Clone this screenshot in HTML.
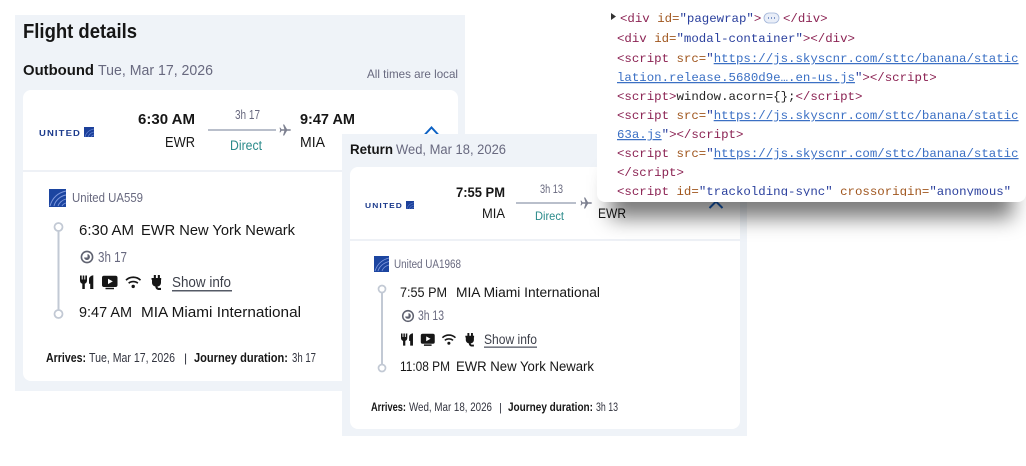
<!DOCTYPE html>
<html><head><meta charset="utf-8"><title>Flight details</title>
<style>
html,body{margin:0;padding:0;background:#fff;width:1026px;height:466px;overflow:hidden}
svg{display:block}
text{font-family:"Liberation Sans",sans-serif;white-space:pre;fill:#161616}
.g{fill:#68697f}
.b{font-weight:bold}
.m{font-family:"Liberation Mono",monospace;font-size:12.4px}
.tg{fill:#8b2252}.at{fill:#a0561f}.vl{fill:#2a3f9d}.ln{fill:#3a6fc4;text-decoration:underline}.tx{fill:#222}
</style></head><body>
<svg width="1026" height="466" viewBox="0 0 1026 466" xmlns="http://www.w3.org/2000/svg">
<defs>
<filter id="sh" x="-20%" y="-100%" width="140%" height="300%"><feGaussianBlur stdDeviation="10"/></filter>
<filter id="soft" x="0" y="0" width="100%" height="100%"><feGaussianBlur stdDeviation="0.35"/></filter>
<g id="plane"><path d="M12 6C12 5.4 11 5.2 10 5.2L8 5.2L5.2.5L4 .5L5.4 5.2L2.5 5.2L1.4 3.6L.5 3.6L1.2 6L.5 8.4L1.4 8.4L2.5 6.8L5.4 6.8L4 11.5L5.2 11.5L8 6.8L10 6.8C11 6.8 12 6.6 12 6Z" fill="#7d8090"/></g>
<g id="sq"><rect width="10" height="10" fill="#1c3f9a"/><path d="M1 10C2 6 5 3 10 2M4 10C5 7.5 7 5.5 10 5M7 10C7.5 9 8.5 8 10 8" fill="none" stroke="#5f80cf" stroke-width=".7"/></g>
<g id="icons" fill="#161616">
<path d="M0 .5h1.700v4h1V.5h1.600v4h1V.5H7v5c0 1.700-.9 2.800-2.200 3.200V14H2.300V8.700C.9 8.300 0 7.200 0 5.500Z"/>
<path d="M10.200 14V8.700H9V4.500C9 2.300 10.500.8 13.300.3V14Z"/>
<path d="M24 .8h11.500a2 2 0 0 1 2 2v7.200a2 2 0 0 1-2 2H24a2 2 0 0 1-2-2V2.800a2 2 0 0 1 2-2ZM25.500 12.700h8.500v1.600h-8.500Z"/>
<path d="M28 3.700l4.800 2.700-4.800 2.700Z" fill="#fff"/>
<path d="M46 5.200C50 1.300 56.500 1.300 60.500 5.200" fill="none" stroke="#161616" stroke-width="1.700"/>
<path d="M48.700 8.200C51 6 55.500 6 57.800 8.200" fill="none" stroke="#161616" stroke-width="1.700"/>
<circle cx="53.200" cy="11.400" r="1.700"/>
<path d="M73.800 0h2.100v3h1.900V0h2.100v3h1.300v1.800h-.2v2.700c0 2.300-1.400 3.700-3.500 4 .1 1 .6 1.400 1.500 1.400h2V15h-2c-2 0-3.500-1.100-3.700-3.500-2-.4-3.300-1.800-3.300-4V4.800H71.500V3h2.300Z"/>
</g>
<g id="clk"><circle r="5.600" fill="none" stroke="#5f6270" stroke-width="1.600"/><path d="M.5-3A3 3 0 1 1-3 .5H.5Z" fill="#5f6270"/></g>
</defs>

<g filter="url(#soft)">
<!-- outbound panel -->
<rect x="15" y="15" width="450" height="376" fill="#eff3f8"/>
<text x="23" y="38" font-size="20" class="b" textLength="114" lengthAdjust="spacingAndGlyphs">Flight details</text>
<text x="23" y="75" font-size="15" class="b" textLength="71" lengthAdjust="spacingAndGlyphs">Outbound</text>
<text x="98" y="75" font-size="15" class="g" textLength="115" lengthAdjust="spacingAndGlyphs">Tue, Mar 17, 2026</text>
<text x="367" y="78" font-size="12" class="g" textLength="91" lengthAdjust="spacingAndGlyphs">All times are local</text>
<rect x="23" y="90" width="435" height="291" rx="8" fill="#fff"/>
<rect x="23" y="170" width="435" height="2" fill="#eef1f6"/>
<text x="39" y="136" font-size="8.5" class="b" style="fill:#1b3a8c" textLength="42" lengthAdjust="spacingAndGlyphs" letter-spacing="1">UNITED</text>
<use href="#sq" x="84" y="127"/>
<text x="138" y="124" font-size="15" class="b" textLength="57" lengthAdjust="spacingAndGlyphs">6:30 AM</text>
<text x="165" y="147" font-size="15" textLength="30" lengthAdjust="spacingAndGlyphs">EWR</text>
<text x="235" y="119" font-size="12.5" class="g" textLength="25" lengthAdjust="spacingAndGlyphs">3h 17</text>
<rect x="208" y="129" width="68" height="2" fill="#b9bfcb"/>
<use href="#plane" x="279" y="124"/>
<text x="230" y="150" font-size="13.5" style="fill:#2a8a8a" textLength="32" lengthAdjust="spacingAndGlyphs">Direct</text>
<text x="300" y="124" font-size="15" class="b" textLength="55" lengthAdjust="spacingAndGlyphs">9:47 AM</text>
<text x="300" y="147" font-size="15" textLength="25" lengthAdjust="spacingAndGlyphs">MIA</text>
<path d="M424.5 135L431.5 127.5L438.5 135" fill="none" stroke="#0f62c4" stroke-width="2"/>

<rect x="49" y="189" width="17" height="18" fill="#1f44a0"/>
<path d="M50 206C52 199 57 193 66 191M54 206C55 201 60 196 66 195M58 206C59 203 62 200 66 199M62 206C62.5 205 64 203.500 66 203" fill="none" stroke="#7f9ade" stroke-width=".9"/>
<text x="72" y="202" font-size="12.5" class="g" textLength="71" lengthAdjust="spacingAndGlyphs">United UA559</text>
<rect x="57.5" y="231" width="2" height="80" fill="#c2c9d4"/>
<circle cx="58.5" cy="227" r="4" fill="#fff" stroke="#c2c9d4" stroke-width="1.8"/>
<circle cx="58.5" cy="314" r="4" fill="#fff" stroke="#c2c9d4" stroke-width="1.8"/>
<text x="79" y="235" font-size="15" textLength="55" lengthAdjust="spacingAndGlyphs">6:30 AM</text>
<text x="141" y="235" font-size="15" textLength="154" lengthAdjust="spacingAndGlyphs">EWR New York Newark</text>
<use href="#clk" x="87" y="257"/>
<text x="98" y="262" font-size="15" class="g" textLength="29" lengthAdjust="spacingAndGlyphs">3h 17</text>
<use href="#icons" x="80" y="275"/>
<text x="172" y="287" font-size="15" style="fill:#3c3f4a" textLength="59" lengthAdjust="spacingAndGlyphs">Show info</text>
<rect x="172" y="290" width="60" height="1.5" fill="#555a66"/>
<text x="79" y="317" font-size="15" textLength="53" lengthAdjust="spacingAndGlyphs">9:47 AM</text>
<text x="141" y="317" font-size="15" textLength="160" lengthAdjust="spacingAndGlyphs">MIA Miami International</text>
<text x="46" y="362" font-size="12.5" class="b" textLength="40" lengthAdjust="spacingAndGlyphs">Arrives:</text>
<text x="89" y="362" font-size="12.5" style="fill:#33343f" textLength="86" lengthAdjust="spacingAndGlyphs">Tue, Mar 17, 2026</text>
<text x="184" y="362" font-size="12" style="fill:#33343f">|</text>
<text x="194" y="362" font-size="12.5" class="b" textLength="94" lengthAdjust="spacingAndGlyphs">Journey duration:</text>
<text x="292" y="362" font-size="12.5" style="fill:#33343f" textLength="24" lengthAdjust="spacingAndGlyphs">3h 17</text>

<!-- return panel -->
<rect x="342" y="134" width="405" height="302" fill="#eff3f8"/>
<text x="350" y="154" font-size="13.5" class="b" textLength="43" lengthAdjust="spacingAndGlyphs">Return</text>
<text x="396" y="154" font-size="13.5" class="g" textLength="110" lengthAdjust="spacingAndGlyphs">Wed, Mar 18, 2026</text>
<rect x="350" y="167" width="390" height="262" rx="8" fill="#fff"/>
<rect x="350" y="239" width="390" height="2" fill="#eef1f6"/>
<text x="365" y="208" font-size="7.5" class="b" style="fill:#1b3a8c" textLength="38" lengthAdjust="spacingAndGlyphs" letter-spacing="1">UNITED</text>
<use href="#sq" transform="translate(406 201) scale(.8)"/>
<text x="456" y="197" font-size="13.5" class="b" textLength="49" lengthAdjust="spacingAndGlyphs">7:55 PM</text>
<text x="482" y="218" font-size="13.5" textLength="23" lengthAdjust="spacingAndGlyphs">MIA</text>
<text x="540" y="193" font-size="11.5" class="g" textLength="23" lengthAdjust="spacingAndGlyphs">3h 13</text>
<rect x="516" y="202" width="60" height="2" fill="#b9bfcb"/>
<use href="#plane" x="580" y="197"/>
<text x="535" y="220" font-size="12" style="fill:#2a8a8a" textLength="29" lengthAdjust="spacingAndGlyphs">Direct</text>
<text x="598" y="218" font-size="13.5" textLength="28" lengthAdjust="spacingAndGlyphs">EWR</text>
<path d="M709.5 208L716 201.5L722.5 208" fill="none" stroke="#0f62c4" stroke-width="2"/>

<rect x="374" y="256" width="15" height="16" fill="#1f44a0"/>
<path d="M375 271C377 265 381 260 389 258M378 271C379 267 383 263 389 261.5M382 271C383 268 385 266 389 265" fill="none" stroke="#7f9ade" stroke-width=".8"/>
<text x="394" y="268" font-size="11.5" class="g" textLength="67" lengthAdjust="spacingAndGlyphs">United UA1968</text>
<rect x="381" y="293" width="2" height="72" fill="#c2c9d4"/>
<circle cx="382" cy="289" r="3.5" fill="#fff" stroke="#c2c9d4" stroke-width="1.7"/>
<circle cx="382" cy="368" r="3.5" fill="#fff" stroke="#c2c9d4" stroke-width="1.7"/>
<text x="400" y="297" font-size="13.5" textLength="47" lengthAdjust="spacingAndGlyphs">7:55 PM</text>
<text x="456" y="297" font-size="13.5" textLength="144" lengthAdjust="spacingAndGlyphs">MIA Miami International</text>
<use href="#clk" transform="translate(408 316) scale(.95)"/>
<text x="418" y="320" font-size="13.5" class="g" textLength="26" lengthAdjust="spacingAndGlyphs">3h 13</text>
<use href="#icons" transform="translate(401 333) scale(.9)"/>
<text x="484" y="344" font-size="13.5" style="fill:#3c3f4a" textLength="53" lengthAdjust="spacingAndGlyphs">Show info</text>
<rect x="484" y="346.5" width="53" height="1.3" fill="#555a66"/>
<text x="400" y="371" font-size="13.5" textLength="50" lengthAdjust="spacingAndGlyphs">11:08 PM</text>
<text x="456" y="371" font-size="13.5" textLength="138" lengthAdjust="spacingAndGlyphs">EWR New York Newark</text>
<text x="371" y="411" font-size="11.5" class="b" textLength="35" lengthAdjust="spacingAndGlyphs">Arrives:</text>
<text x="409" y="411" font-size="11.5" style="fill:#33343f" textLength="83" lengthAdjust="spacingAndGlyphs">Wed, Mar 18, 2026</text>
<text x="499" y="411" font-size="11" style="fill:#33343f">|</text>
<text x="508" y="411" font-size="11.5" class="b" textLength="85" lengthAdjust="spacingAndGlyphs">Journey duration:</text>
<text x="596" y="411" font-size="11.5" style="fill:#33343f" textLength="22" lengthAdjust="spacingAndGlyphs">3h 13</text>

<!-- devtools popup -->
<rect x="610" y="175" width="403" height="43" fill="#000" fill-opacity=".52" filter="url(#sh)"/>
<path d="M611 13L616 16.5L611 20Z" fill="#333"/>
<text class="m" y="22" x="620"><tspan class="tg">&lt;div </tspan><tspan class="at">id=</tspan><tspan class="vl">"pagewrap"</tspan><tspan class="tg">&gt;</tspan></text>
<rect x="597" y="28" width="429" height="174" rx="8" fill="#fff"/>
<rect x="764" y="13" width="15" height="10" rx="5" fill="#e9eef8" stroke="#9fb3d8" stroke-width=".8"/>
<path d="M768 18h1M771 18h1M774 18h1" stroke="#3a5fa8" stroke-width="1.2"/>
<text class="m" y="22" x="783"><tspan class="tg">&lt;/div&gt;</tspan></text>
<text class="m" y="42" x="617"><tspan class="tg">&lt;div </tspan><tspan class="at">id=</tspan><tspan class="vl">"modal-container"</tspan><tspan class="tg">&gt;&lt;/div&gt;</tspan></text>
<text class="m" y="62" x="617"><tspan class="tg">&lt;script </tspan><tspan class="at">src=</tspan><tspan class="vl">"</tspan><tspan class="ln">https://js.skyscnr.com/sttc/banana/static</tspan></text>
<text class="m" y="81" x="617"><tspan class="ln">lation.release.5680d9e….en-us.js</tspan><tspan class="vl">"</tspan><tspan class="tg">&gt;&lt;/script&gt;</tspan></text>
<text class="m" y="100" x="617"><tspan class="tg">&lt;script&gt;</tspan><tspan class="tx">window.acorn={};</tspan><tspan class="tg">&lt;/script&gt;</tspan></text>
<text class="m" y="119" x="617"><tspan class="tg">&lt;script </tspan><tspan class="at">src=</tspan><tspan class="vl">"</tspan><tspan class="ln">https://js.skyscnr.com/sttc/banana/static</tspan></text>
<text class="m" y="138" x="617"><tspan class="ln">63a.js</tspan><tspan class="vl">"</tspan><tspan class="tg">&gt;&lt;/script&gt;</tspan></text>
<text class="m" y="157" x="617"><tspan class="tg">&lt;script </tspan><tspan class="at">src=</tspan><tspan class="vl">"</tspan><tspan class="ln">https://js.skyscnr.com/sttc/banana/static</tspan></text>
<text class="m" y="176" x="617"><tspan class="tg">&lt;/script&gt;</tspan></text>
<svg x="597" y="180" width="429" height="16" viewBox="597 180 429 16"><text class="m" y="195" x="617"><tspan class="tg">&lt;script </tspan><tspan class="at">id=</tspan><tspan class="vl">"trackolding-sync" </tspan><tspan class="at">crossorigin=</tspan><tspan class="vl">"anonymous"</tspan></text></svg>
</g>
</svg>
</body></html>
